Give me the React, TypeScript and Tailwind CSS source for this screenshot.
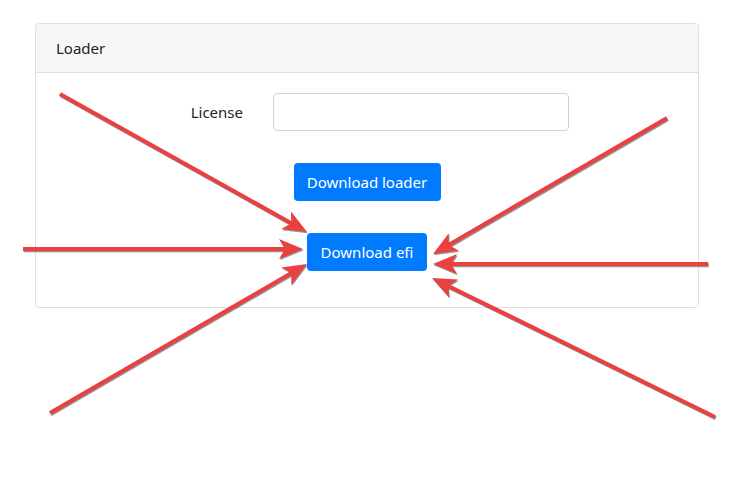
import React from "react";

type Arrow = { x1: number; y1: number; x2: number; y2: number };

const arrows: Arrow[] = [
  { x1: 60, y1: 94, x2: 307, y2: 232 },
  { x1: 23, y1: 249, x2: 303, y2: 249 },
  { x1: 50, y1: 413, x2: 307, y2: 264 },
  { x1: 667, y1: 118, x2: 433, y2: 254 },
  { x1: 708, y1: 264, x2: 433, y2: 264 },
  { x1: 715, y1: 417, x2: 432, y2: 278 },
];

function ArrowShape({ a, dx = 0, dy = 0, color }: { a: Arrow; dx?: number; dy?: number; color: string }) {
  const ang = Math.atan2(a.y2 - a.y1, a.x2 - a.x1);
  const deg = (ang * 180) / Math.PI;
  const len = Math.hypot(a.x2 - a.x1, a.y2 - a.y1);
  return (
    <g transform={`translate(${a.x1 + dx} ${a.y1 + dy}) rotate(${deg})`}>
      <line x1={0} y1={0} x2={len - 14} y2={0} stroke={color} strokeWidth={4} strokeLinecap="butt" />
      <polygon points={`${len},0 ${len - 24},-10 ${len - 18},0 ${len - 24},10`} fill={color} />
    </g>
  );
}

export default function App() {
  return (
    <div
      className="relative w-[746px] h-[481px] bg-white text-[#212529] overflow-hidden"
      style={{ fontFamily: '"Segoe UI", "Noto Sans", "Open Sans", sans-serif' }}
    >
      <div className="pt-[23px] pl-[35px]">
        <div className="w-[664px] h-[285px] border border-[#dfdfdf] rounded-[4px] flex flex-col">
          <div className="h-[49px] bg-[#f7f7f7] border-b border-[#dfdfdf] px-5 flex items-center text-[15px] rounded-t-[4px]">
            Loader
          </div>
          <div className="flex flex-col pt-5">
            <div className="flex items-center h-[38px]">
              <div className="w-[207px] text-right text-[15px]">License</div>
              <input className="ml-[30px] w-[296px] h-[38px] border border-[#ced4da] rounded-[4px] outline-none" />
            </div>
            <div className="flex justify-center mt-[32px]">
              <button className="w-[147px] h-[38px] bg-[#007bff] text-white rounded-[4px] text-[15px]">
                Download loader
              </button>
            </div>
            <div className="flex justify-center mt-[32px]">
              <button className="w-[120px] h-[38px] bg-[#007bff] text-white rounded-[4px] text-[15px]">
                Download efi
              </button>
            </div>
          </div>
        </div>
      </div>
      <svg className="absolute inset-0 pointer-events-none" width={746} height={481}>
        {arrows.map((a, i) => (
          <ArrowShape key={"s" + i} a={a} dx={0.8} dy={1.2} color="rgba(60,60,60,0.55)" />
        ))}
        {arrows.map((a, i) => (
          <ArrowShape key={"a" + i} a={a} color="#ea4040" />
        ))}
      </svg>
    </div>
  );
}
